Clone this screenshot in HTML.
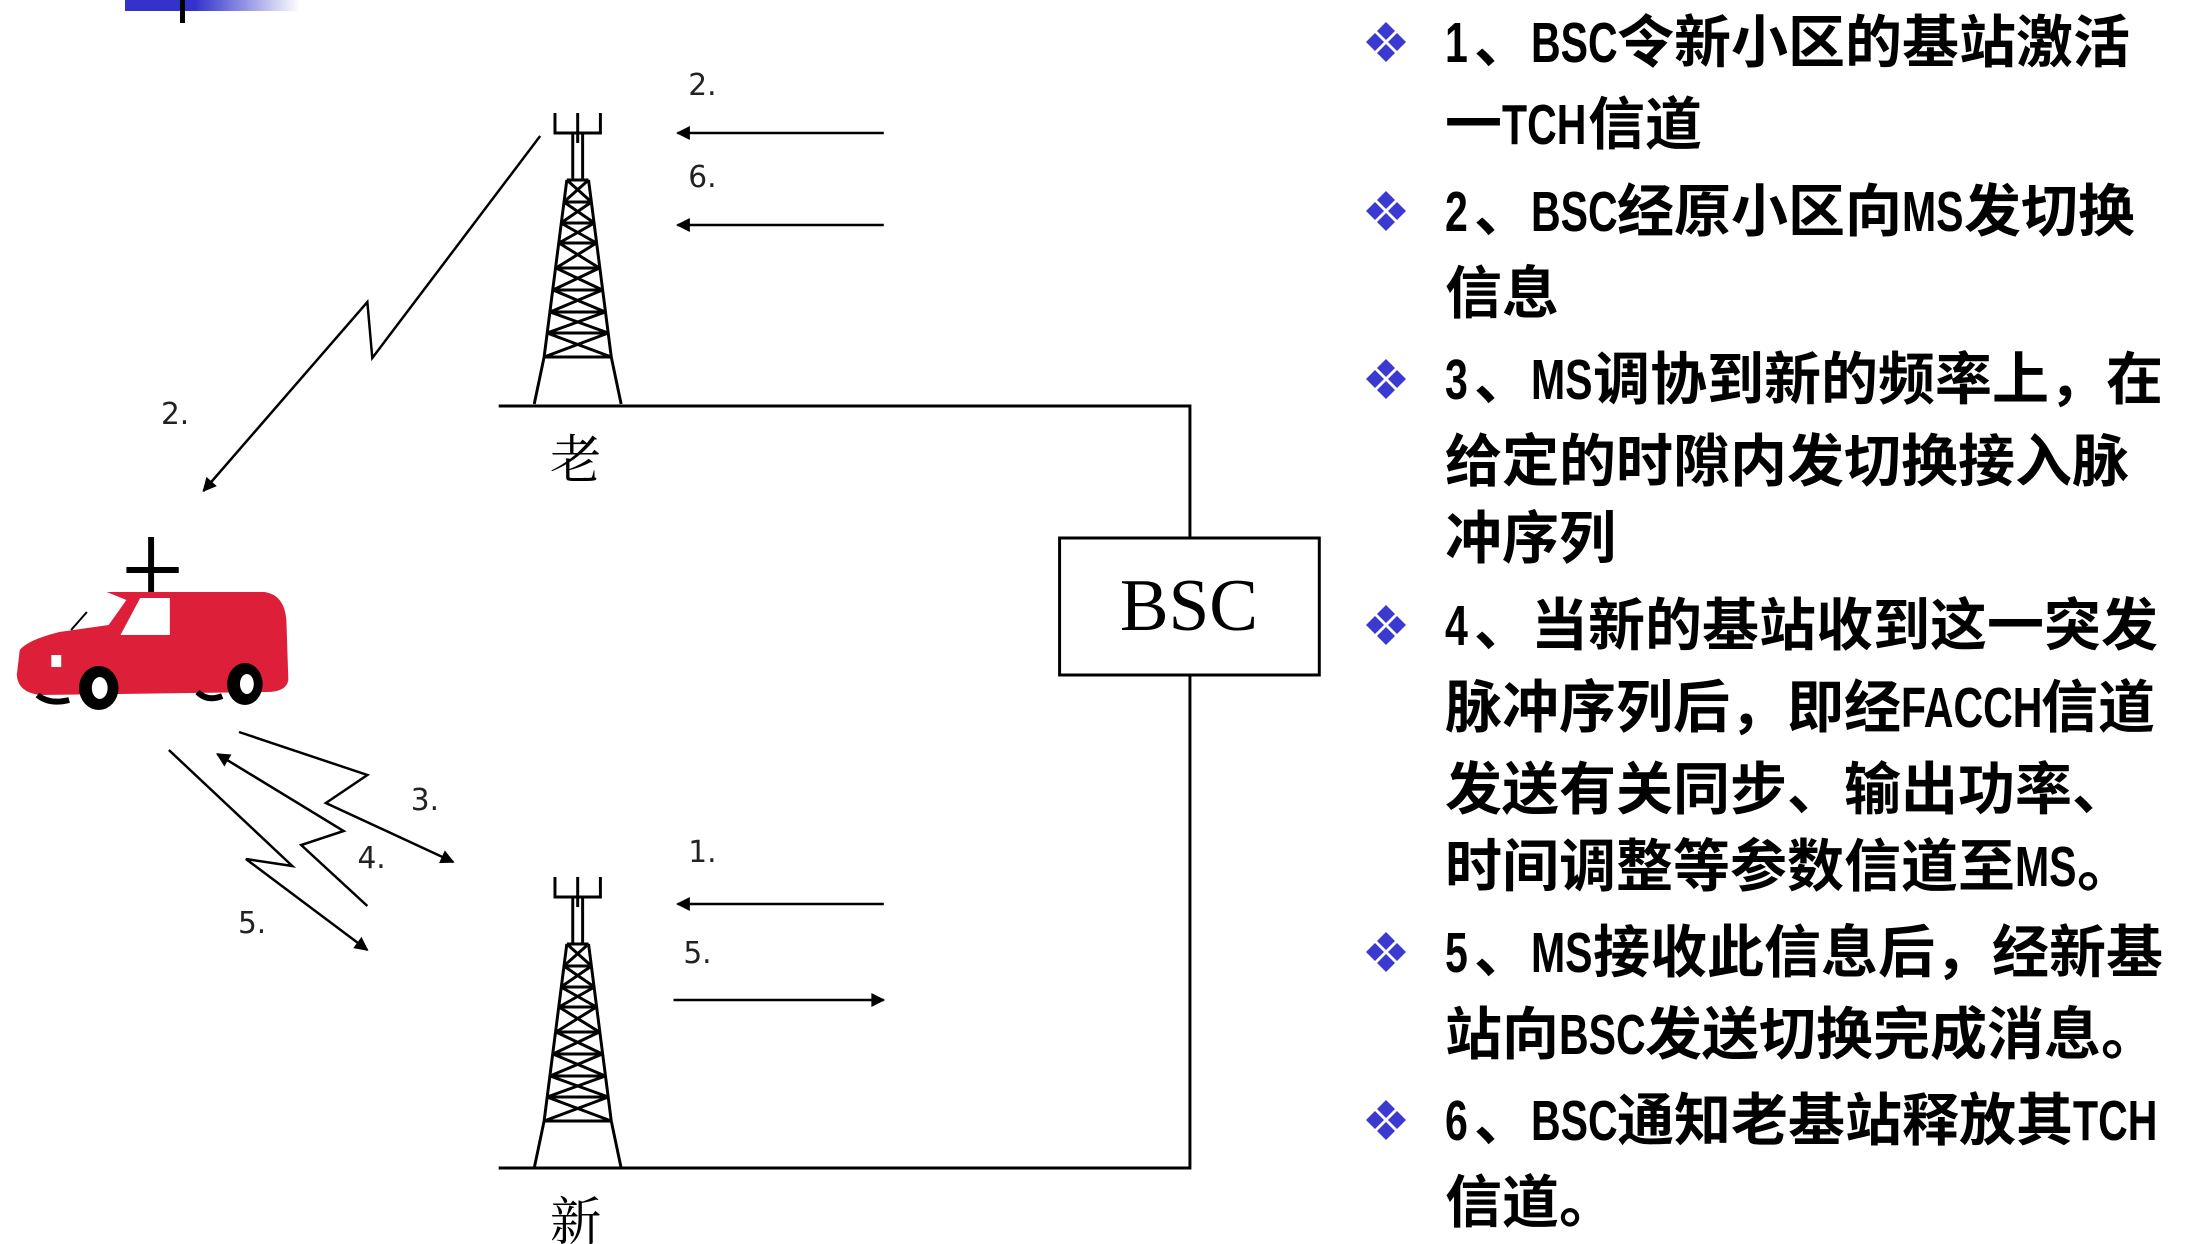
<!DOCTYPE html>
<html><head><meta charset="utf-8"><style>
html,body{margin:0;padding:0;background:#fff;}
body{width:2200px;height:1244px;position:relative;overflow:hidden;}
.t{position:absolute;left:1445px;font-family:"Noto Sans CJK SC",sans-serif;font-weight:bold;font-size:57px;line-height:77px;color:#000;white-space:nowrap;}
.t i{font-style:normal;display:inline-block;white-space:nowrap;overflow:visible;vertical-align:baseline;}
.t i span{display:inline-block;font-family:"Liberation Sans",sans-serif;font-weight:bold;transform:scaleX(.72);transform-origin:0 0;}
.b{position:absolute;left:1364px;width:44px;height:44px;}
</style></head><body>
<div style="position:absolute;left:125px;top:0;width:175px;height:11px;background:linear-gradient(90deg,#3333cc 0%,#3333cc 40%,#fff 100%);"></div>
<div style="position:absolute;left:180px;top:0;width:5px;height:23px;background:#000;"></div>

<svg width="2200" height="1244" style="position:absolute;left:0;top:0" xmlns="http://www.w3.org/2000/svg">
<defs>
<marker id="ah2" viewBox="0 0 10 10" refX="9" refY="5" markerWidth="22" markerHeight="14" markerUnits="userSpaceOnUse" orient="auto"><path d="M0 0 L10 5 L0 10 Z" fill="#000"/></marker>
<g id="tw" fill="none" stroke="#000" stroke-width="3">
<path d="M-23 0 V20 H23 V0 M0 0 V30"/>
<path d="M-5 20 V67 M5 20 V67 M-11 67 L-34 244 M11 67 L34 244 M-34 244 L-44 291 M34 244 L44 291"/>
<path d="M-11 67 H11 M-14 89 H14 M-17 110 H17 M-19 130 H19 M-22 155 H22 M-25 177 H25 M-28 199 H28 M-31 220 H31 M-34 244 H34"/>
<path d="M-11 67 L14 89 M11 67 L-14 89 M-14 89 L17 110 M14 89 L-17 110 M-17 110 L19 130 M17 110 L-19 130 M-19 130 L22 155 M19 130 L-22 155 M-22 155 L25 177 M22 155 L-25 177 M-25 177 L28 199 M25 177 L-28 199 M-28 199 L31 220 M28 199 L-31 220 M-31 220 L34 244 M31 220 L-34 244"/>
</g>
</defs>
<g transform="scale(0.9875,1)">
<use href="#tw" x="585" y="113"/>
<use href="#tw" x="585" y="877"/>
<g fill="none" stroke="#000" stroke-width="3">
<path d="M505 406 H1205 V538 M1205 675 V1168 H505"/>
<rect x="1073" y="538" width="263" height="137"/>
</g>
<text x="1204" y="630" font-family="Liberation Serif,serif" font-size="74" text-anchor="middle">BSC</text>
<g fill="none" stroke="#000" stroke-width="2.5">
<line x1="895" y1="133" x2="686" y2="133" marker-end="url(#ah2)"/>
<line x1="895" y1="225" x2="686" y2="225" marker-end="url(#ah2)"/>
<line x1="895" y1="904" x2="686" y2="904" marker-end="url(#ah2)"/>
<line x1="682" y1="1000" x2="895" y2="1000" marker-end="url(#ah2)"/>
<polyline points="547,136 377,358 372,302 206,491" marker-end="url(#ah2)"/>
<polyline points="242,732 372,775 330,803 459,862" marker-end="url(#ah2)"/>
<polyline points="372,906 305,845 348,831 220,754" marker-end="url(#ah2)"/>
<polyline points="171,750 296,866 249,859 372,950" marker-end="url(#ah2)"/>
</g>
<g font-family="DejaVu Sans,sans-serif" font-size="30" fill="#222">
<text x="697" y="95">2.</text><text x="697" y="187">6.</text>
<text x="697" y="862">1.</text><text x="692" y="963">5.</text>
<text x="163" y="424">2.</text><text x="416" y="810">3.</text>
<text x="362" y="868">4.</text><text x="241" y="933">5.</text>
</g>
<g font-family="Noto Serif CJK SC,serif" font-size="52" fill="#000" text-anchor="middle">
<text x="583" y="478">老</text><text x="583" y="1240">新</text>
</g>
<path d="M153 537 V592 M128 570 H181" stroke="#000" stroke-width="6" fill="none"/>
<path d="M108 592 L268 592 Q288 595 290 620 L292 680 Q290 692 270 692 L40 695 Q18 692 17 675 L20 650 Q28 640 60 632 L110 625 L128 600 Z" fill="#dd1f3a"/>
<path d="M142 598 H172 V635 H122 Z" fill="#fff"/>
<line x1="72" y1="630" x2="88" y2="612" stroke="#000" stroke-width="2"/>
<rect x="52" y="655" width="10" height="12" fill="#fff"/>
<ellipse cx="100" cy="688" rx="20" ry="22" fill="#000"/><ellipse cx="101" cy="688" rx="8" ry="11" fill="#fff"/>
<ellipse cx="248" cy="684" rx="18" ry="21" fill="#000"/><ellipse cx="250" cy="684" rx="7" ry="10" fill="#fff"/>
<path d="M38 695 Q50 705 70 700 M200 692 Q210 702 225 696" stroke="#000" stroke-width="6" fill="none"/>
</g>
</svg>

<svg width="0" height="0" style="position:absolute"><defs><g id="bl" fill="#3a3ad0"><path d="M22 2 L31 11 L22 20 L13 11Z"/><path d="M11 13 L20 22 L11 31 L2 22Z"/><path d="M33 13 L42 22 L33 31 L24 22Z"/><path d="M22 24 L31 33 L22 42 L13 33Z"/></g></defs></svg>
<svg class="b" style="top:20px"><use href="#bl"/></svg>
<svg class="b" style="top:189px"><use href="#bl"/></svg>
<svg class="b" style="top:357px"><use href="#bl"/></svg>
<svg class="b" style="top:603px"><use href="#bl"/></svg>
<svg class="b" style="top:930px"><use href="#bl"/></svg>
<svg class="b" style="top:1098px"><use href="#bl"/></svg>

<div class="t" style="top:0px"><i style="width:29px"><span>1</span></i>、<i style="width:86px"><span>BSC</span></i>令新小区的基站激活<br>一<i style="width:86px"><span>TCH</span></i>信道</div>
<div class="t" style="top:169px"><i style="width:29px"><span>2</span></i>、<i style="width:86px"><span>BSC</span></i>经原小区向<i style="width:62px"><span>MS</span></i>发切换<br>信息</div>
<div class="t" style="top:337px"><i style="width:29px"><span>3</span></i>、<i style="width:62px"><span>MS</span></i>调协到新的频率上，在<br>给定的时隙内发切换接入脉<br>冲序列</div>
<div class="t" style="top:583px"><i style="width:29px"><span>4</span></i>、当新的基站收到这一突发<br>脉冲序列后，即经<i style="width:140px"><span>FACCH</span></i>信道<br>发送有关同步、输出功率、<br>时间调整等参数信道至<i style="width:62px"><span>MS</span></i>。</div>
<div class="t" style="top:910px"><i style="width:29px"><span>5</span></i>、<i style="width:62px"><span>MS</span></i>接收此信息后，经新基<br>站向<i style="width:86px"><span>BSC</span></i>发送切换完成消息。</div>
<div class="t" style="top:1078px"><i style="width:29px"><span>6</span></i>、<i style="width:86px"><span>BSC</span></i>通知老基站释放其<i style="width:86px"><span>TCH</span></i><br>信道。</div>
</body></html>
